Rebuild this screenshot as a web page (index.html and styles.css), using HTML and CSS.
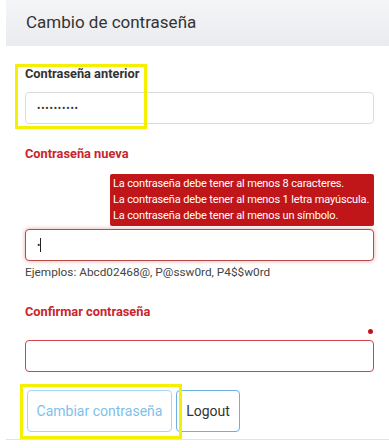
FILE: index.html
```html
<!DOCTYPE html>
<html lang="es">
<head>
<meta charset="utf-8">
<title>Cambio de contraseña</title>
<link rel="stylesheet" href="styles.css">
</head>
<body>
<div class="page">
  <div class="header">Cambio de contraseña</div>
  <form class="form">
    <div class="field field-first">
      <label class="label">Contraseña anterior</label>
      <div class="input"><span class="dots">••••••••••</span></div>
      <span class="highlight highlight-old"></span>
    </div>
    <div class="field field-new">
      <label class="label label-error">Contraseña nueva</label>
      <div class="error-wrap">
        <div class="error-box">
          <div>La contraseña debe tener al menos 8 caracteres.</div>
          <div>La contraseña debe tener al menos 1 letra mayúscula.</div>
          <div>La contraseña debe tener al menos un símbolo.</div>
        </div>
      </div>
      <div class="input input-invalid input-focus"><span class="dot-char">•</span><span class="caret"></span></div>
      <div class="hint">Ejemplos: Abcd02468@, P@ssw0rd, P4$$w0rd</div>
    </div>
    <div class="field field-confirm">
      <label class="label label-error">Confirmar contraseña</label>
      <div class="req-row"><span class="req-dot"></span></div>
      <div class="input input-invalid"></div>
    </div>
    <div class="actions">
      <button type="button" class="btn btn-primary">Cambiar contraseña</button>
      <button type="button" class="btn btn-secondary">Logout</button>
      <span class="highlight highlight-btn"></span>
    </div>
  </form>
  <div class="footer-line"></div>
</div>
</body>
</html>
```
FILE: styles.css
```css
* { box-sizing: border-box; }
html, body { margin: 0; padding: 0; background: #fff; }
body {
  font-family: Roboto, "Liberation Sans", Arial, sans-serif;
  color: #333;
  width: 389px;
  height: 448px;
  overflow: hidden;
}
.page { padding-left: 6px; }
.header {
  height: 46px;
  background: linear-gradient(#f4f5f7, #eaebee);
  padding-left: 20px;
  font-size: 17px;
  line-height: 44px;
  color: #333;
}
.form {
  padding: 0 15px 0 19px;
}
.field { position: relative; display: flex; flex-direction: column; }
.field-first { padding-top: 20px; }
.label {
  font-size: 12.8px;
  font-weight: 700;
  line-height: 16px;
  color: #333;
  margin-bottom: 10px;
}
.label-error { color: #c9252c; }
.input {
  display: flex;
  align-items: center;
  height: 32px;
  width: 100%;
  border: 1px solid #dcdcdc;
  border-radius: 4px;
  padding: 0 11px;
  font-size: 12px;
  color: #333;
  background: #fff;
}
.dots { font-size: 10px; letter-spacing: 0.8px; color: #333; }
.field-new { margin-top: 22px; }
.field-new .label { margin-bottom: 12px; }
.error-wrap { display: flex; justify-content: flex-end; margin-bottom: 3px; }
.error-box {
  background: #c0161a;
  color: #fff;
  font-size: 11px;
  letter-spacing: -0.14px;
  line-height: 16px;
  padding: 2px 3px;
  border-radius: 2px;
  width: 264px;
  white-space: nowrap;
}
.input-invalid { border-color: #d0434a; }
.input-focus {
  border-color: #b94a48;
  box-shadow: 0 0 4px rgba(200, 60, 60, 0.45);
}
.dot-char { font-size: 10px; color: #333; }
.caret { display: inline-block; width: 1px; height: 14px; background: #222; }
.hint {
  font-size: 11.8px;
  line-height: 16px;
  color: #444;
  margin-top: 3px;
}
.field-confirm { margin-top: 24px; }
.field-confirm .label { margin-bottom: 8px; }
.req-row { display: flex; justify-content: flex-end; height: 12px; padding-right: 1px; }
.req-dot {
  width: 5px; height: 5px; border-radius: 50%;
  background: #c0161a;
  margin-top: 1px;
}
.actions {
  position: relative;
  display: flex;
  gap: 4px;
  margin-top: 18px;
  padding-left: 2px;
}
.btn {
  height: 42px;
  border-radius: 4px;
  background: #fff;
  font-family: inherit;
  font-size: 14px;
  padding: 0;
  white-space: nowrap;
  cursor: pointer;
}
.btn-primary {
  width: 145px;
  border: 1px solid #a8d5f3;
  color: #80bfea;
}
.btn-secondary {
  width: 64px;
  border: 1px solid #6bb0e3;
  color: #333;
}
.highlight {
  position: absolute;
  border: 3px solid #f5f000;
  pointer-events: none;
}
.highlight-old { left: -10px; top: 18px; width: 132px; height: 65px; }
.highlight-btn { left: -5px; top: -6px; width: 162px; height: 55px; }
.footer-line {
  height: 1px;
  background: #e3e3e3;
  margin-top: 7px;
}
```
